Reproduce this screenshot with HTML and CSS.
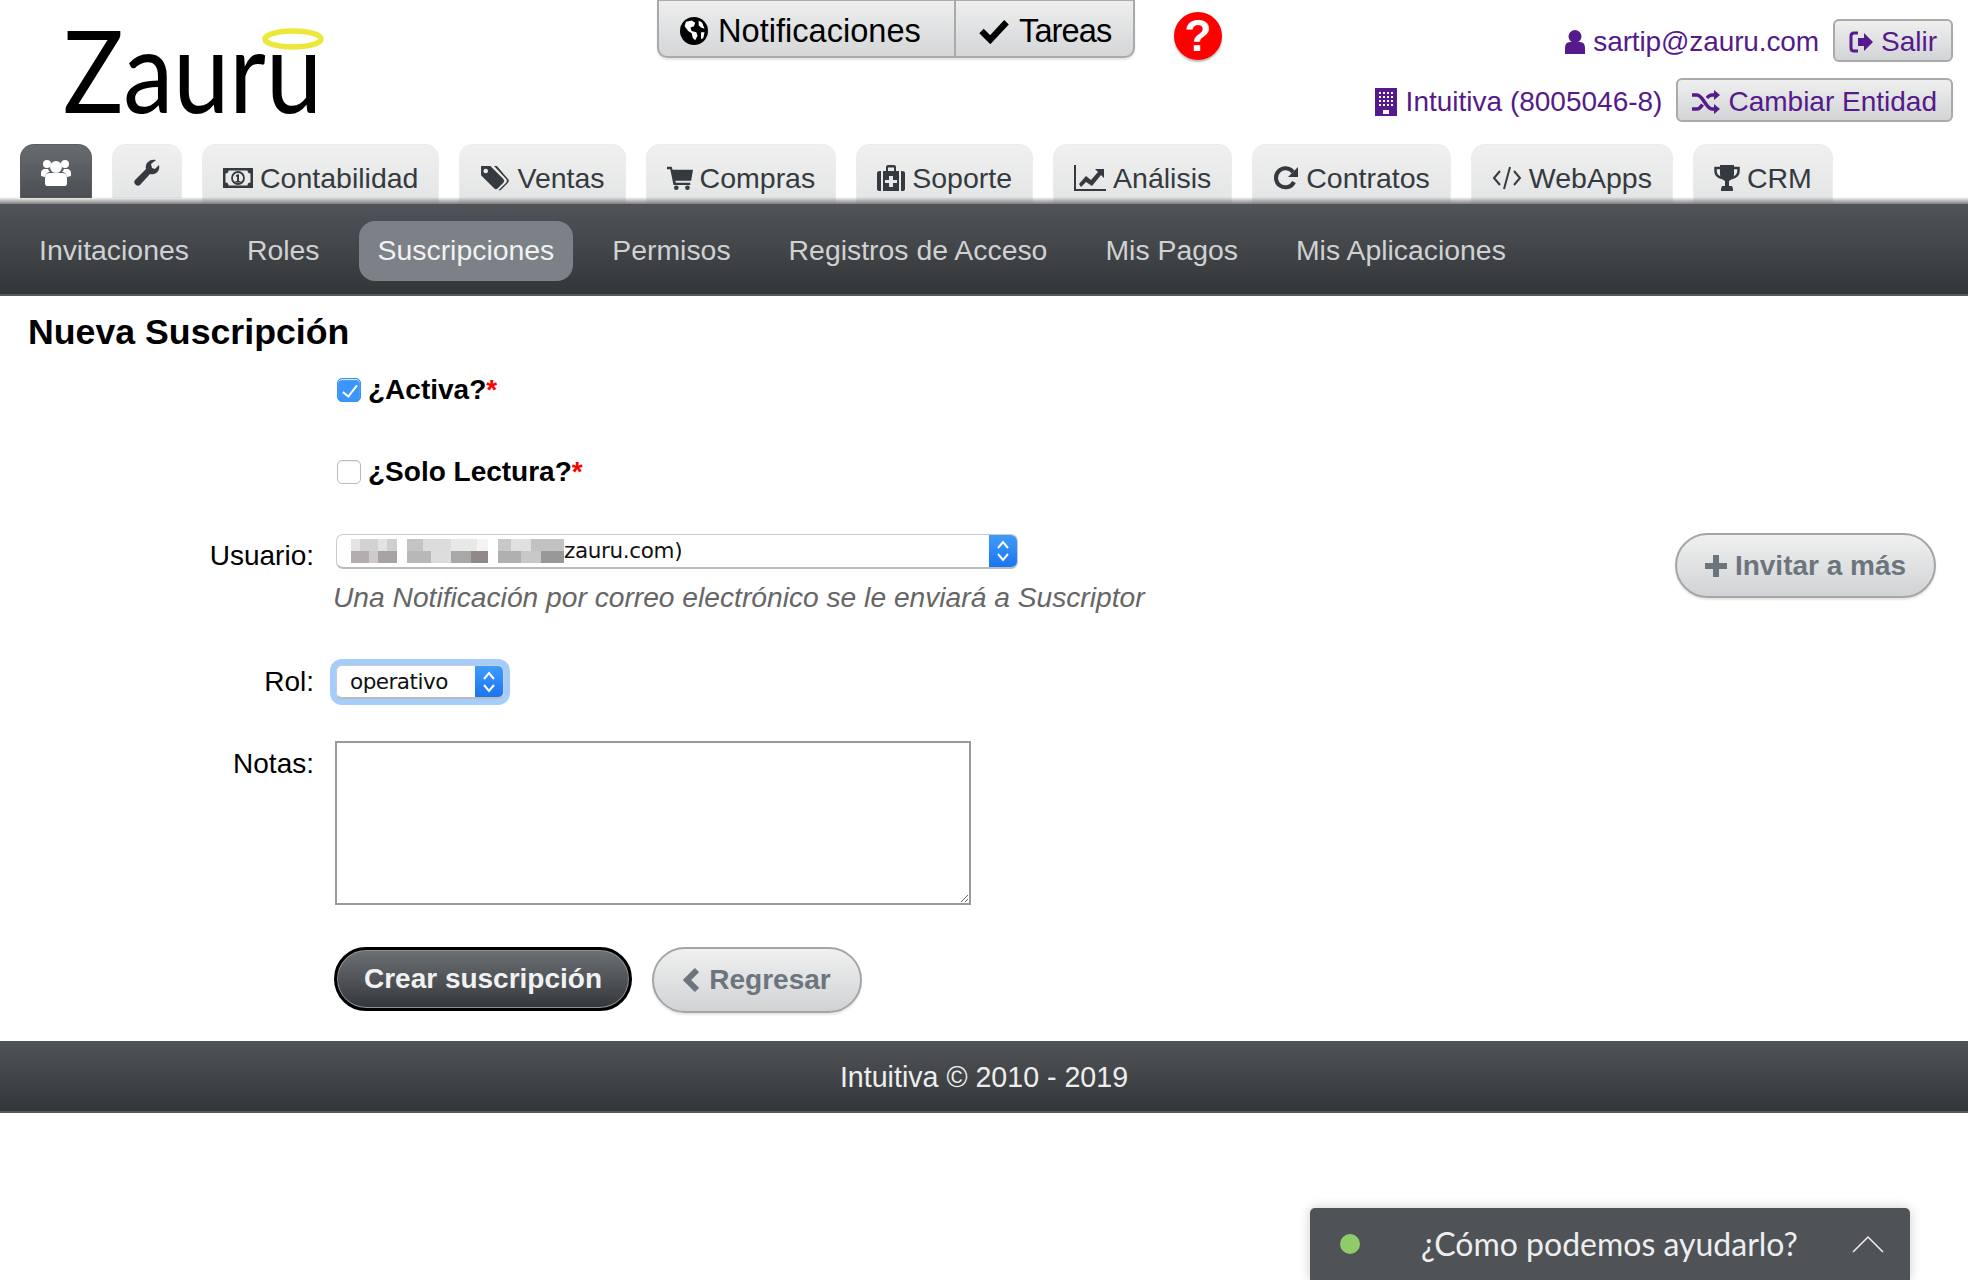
FILE: index.html
```html
<!DOCTYPE html>
<html lang="es">
<head>
<meta charset="utf-8">
<title>Nueva Suscripción - Zauru</title>
<link rel="stylesheet" href="styles.css">
</head>
<body>
<header class="top">
  <a class="logo">
    <svg class="logo-mark" viewBox="0 0 360 144"><text class="logo-text" x="0" y="113" textLength="259" lengthAdjust="spacingAndGlyphs">Zauru</text></svg>
    <svg class="halo" viewBox="0 0 62 24"><ellipse cx="31" cy="12" rx="28" ry="8" fill="none" stroke="#ebe83a" stroke-width="5.500"/></svg>
  </a>
  <div class="alerts">
    <a class="alert-btn alert-notif">
      <svg class="ico ico-lg" viewBox="0 0 24 24"><circle cx="12" cy="12" r="12" fill="#000"/><path fill="#fff" d="M5 4l5-1 3 2-1 3-3 1 1 3 4 1 1 3-2 4-2-2-1-4-3-2-3-4zM16 3l3 2 2 5-3-1-2-2zM18 13l3 0-1 5-2 1z"/></svg>
      Notificaciones</a>
    <a class="alert-btn alert-task">
      <svg class="ico ico-check" viewBox="0 0 24 20"><path fill="none" stroke="#000" stroke-width="5" d="M2 10l7 7L22 3"/></svg>
      Tareas</a>
  </div>
  <a class="help">?</a>
  <div class="account">
    <div class="account-row account-row-1">
      <a class="link">
        <svg class="ico" viewBox="0 0 20 24"><circle cx="10" cy="6.500" r="6.500"/><path d="M0 24v-6q0-6 5-6h10q5 0 5 6v6z"/></svg>
        sartip@zauru.com</a>
      <a class="small-btn btn-salir">
        <svg class="ico" viewBox="0 0 24 24"><path fill="none" stroke="currentColor" stroke-width="3" d="M9 3H5Q2 3 2 6v12q0 3 3 3h4"/><path d="M9 8h6V3l9 9-9 9v-5H9z"/></svg>
        Salir</a>
    </div>
    <div class="account-row account-row-2">
      <a class="link">
        <svg class="ico ico-build" viewBox="0 0 22 28" fill-rule="evenodd"><path d="M0 0h22v28H0zM4 4v2h2V4zm4 0v2h2V4zm4 0v2h2V4zm4 0v2h2V4zM4 8v2h2V8zm4 0v2h2V8zm4 0v2h2V8zm4 0v2h2V8zM4 12v2h2v-2zm4 0v2h2v-2zm4 0v2h2v-2zm4 0v2h2v-2zM4 16v2h2v-2zm4 0v2h2v-2zm4 0v2h2v-2zm4 0v2h2v-2zM8 22v4h6v-4z"/></svg>
        Intuitiva (8005046-8)</a>
      <a class="small-btn btn-cambiar">
        <svg class="ico ico-shuffle" viewBox="0 0 28 24"><path fill="none" stroke="currentColor" stroke-width="3.500" d="M0 5h5c6 0 9 14 15 14h3M0 19h5c2.500 0 4-2 5.500-4.500M15 8c1.500-1.800 3-3 5-3h3"/><path d="M22 0l6 5-6 5zM22 14l6 5-6 5z"/></svg>
        Cambiar Entidad</a>
    </div>
  </div>
</header>

<nav class="tabs">
  <a class="tab tab-icon tab-dark"><svg class="ico ico-users" viewBox="0 0 30 28"><circle cx="15" cy="9" r="6"/><circle cx="6" cy="6" r="4"/><circle cx="24" cy="6" r="4"/><path d="M6 28q-2 0-2-3v-5q0-5 5-5h12q5 0 5 5v5q0 3-2 3z"/><path d="M0 18v-3q0-3 3-4h4q1 2 2 3-4 0-5 5zM30 18v-3q0-3-3-4h-4q-1 2-2 3 4 0 5 5z"/></svg></a>
  <a class="tab tab-icon tab-wrench"><svg class="ico" viewBox="0 0 26 28"><path d="M25 7c1 4-1 8-5 9-2 .5-3 .3-4 0L6 27c-1 1-3 1-4 0l-1-1c-1-1-1-3 0-4L12 11c-.500-2-.300-4 1-6 2-3 6-4 9-3l-5 4 1 4 3 1z"/></svg></a>
  <a class="tab"><svg class="ico ico-money" viewBox="0 0 30 24" fill-rule="evenodd"><path d="M0 2h30v20H0zM5.500 4.500q0 3-3 3v9q3 0 3 3h19q0-3 3-3v-9q-3 0-3-3z"/><circle cx="15" cy="12" r="6" fill="none" stroke="currentColor" stroke-width="1.800"/><path d="M13 9l3-1v7h1.500v1.500h-5V15H14v-4.500l-1 .4z"/></svg>Contabilidad</a>
  <a class="tab"><svg class="ico ico-tags" viewBox="0 0 32 28" fill-rule="evenodd"><path d="M1 1h10l14 14q2 2 0 4l-6 6q-2 2-4 0L1 11zM6 4a2.500 2.500 0 1 0 .1 0z"/><path d="M15 1h3l12 14q2 2 0 4l-7 7q-2 2-3 1l8-8q2-2 0-4z"/></svg>Ventas</a>
  <a class="tab"><svg class="ico ico-cart" viewBox="0 0 28 26"><path d="M0 1h5l1 3h22l-2 12H9l.500 2H25v2.500H7L3.500 3.500H0z"/><circle cx="10" cy="23.500" r="2.500"/><circle cx="22" cy="23.500" r="2.500"/></svg>Compras</a>
  <a class="tab"><svg class="ico ico-med" viewBox="0 0 28 26" fill-rule="evenodd"><path d="M0 8q0-2 3-2h1v20H3q-3 0-3-2zM28 8q0-2-3-2h-1v20h1q3 0 3-2zM6 6h3V2q0-2 2-2h6q2 0 2 2v4h3v20H6zM11 2.500V6h6V2.500zM12 11v4H8v3h4v4h4v-4h4v-3h-4v-4z"/></svg>Soporte</a>
  <a class="tab"><svg class="ico ico-chart" viewBox="0 0 32 26"><path d="M0 0h2v24h30v2H0z"/><path d="M5 19l7-8 5 4 7-8-3-3h9v9l-3-3-9 11-6-4-5 5z"/></svg>Análisis</a>
  <a class="tab"><svg class="ico ico-refresh" viewBox="0 0 26 26"><path fill="none" stroke="currentColor" stroke-width="4" d="M21 17a9.500 9.500 0 1 1-1-10"/><path d="M25 2v10H15z"/></svg>Contratos</a>
  <a class="tab"><svg class="ico ico-code" viewBox="0 0 30 26"><path fill="none" stroke="currentColor" stroke-width="2" d="M8 6l-6 7 6 7M22 6l6 7-6 7M18 2l-6 22"/></svg>WebApps</a>
  <a class="tab"><svg class="ico ico-trophy" viewBox="0 0 26 26"><path d="M6 0h14v9c0 4-3 6-5 7v5h3l1 3v2H7v-2l1-3h3v-5c-2-1-5-3-5-7z"/><path fill="none" stroke="currentColor" stroke-width="2.500" d="M6 3H1.500v3C1.500 10 4 12 8 13M20 3h4.500v3c0 4-2.500 6-6.500 7"/></svg>CRM</a>
</nav>

<nav class="subnav">
  <a class="pill">Invitaciones</a>
  <a class="pill">Roles</a>
  <a class="pill pill-active">Suscripciones</a>
  <a class="pill">Permisos</a>
  <a class="pill">Registros de Acceso</a>
  <a class="pill">Mis Pagos</a>
  <a class="pill">Mis Aplicaciones</a>
</nav>

<main class="main">
  <h1 class="title">Nueva Suscripción</h1>
  <form class="form">
    <label class="check-row"><input class="check" type="checkbox" checked> ¿Activa?<span class="req">*</span></label>
    <label class="check-row check-row-2"><input class="check" type="checkbox"> ¿Solo Lectura?<span class="req">*</span></label>

    <div class="field field-user">
      <span class="label">Usuario:</span>
      <div class="user-col">
        <div class="select select-user">
          <span class="select-value">
            <span class="mosaic"><span class="mosaic-top"></span><span class="mosaic-bottom"></span></span>zauru.com)
          </span>
          <span class="select-arrow"><svg viewBox="0 0 16 26"><path fill="none" stroke="#fff" stroke-width="2" d="M3 10l5-6 5 6M3 16l5 6 5-6"/></svg></span>
        </div>
        <p class="hint">Una Notificación por correo electrónico se le enviará a Suscriptor</p>
      </div>
      <a class="pill-btn btn-invite"><svg class="ico ico-plus" viewBox="0 0 22 22"><path d="M8 0h6v8h8v6h-8v8H8v-8H0V8h8z"/></svg>Invitar a más</a>
    </div>

    <div class="field field-rol">
      <span class="label">Rol:</span>
      <div class="select select-rol">
        <span class="select-value">operativo</span>
        <span class="select-arrow"><svg viewBox="0 0 16 26"><path fill="none" stroke="#fff" stroke-width="2" d="M3 10l5-6 5 6M3 16l5 6 5-6"/></svg></span>
      </div>
    </div>

    <div class="field field-notes">
      <span class="label">Notas:</span>
      <textarea class="notes"></textarea>
    </div>

    <div class="actions">
      <button class="pill-btn btn-create" type="button">Crear suscripción</button>
      <a class="pill-btn btn-back"><svg class="ico ico-back" viewBox="0 0 16 26"><path fill="none" stroke="currentColor" stroke-width="6" d="M14 3L4 13l10 10"/></svg>Regresar</a>
    </div>
  </form>
</main>

<footer class="footer">Intuitiva © 2010 - 2019</footer>

<aside class="chat">
  <span class="chat-dot"></span>
  <span class="chat-text">¿Cómo podemos ayudarlo?</span>
  <svg class="chat-chev" viewBox="0 0 32 18"><path fill="none" stroke="#eee" stroke-width="1.500" d="M1 17L16 2l15 15"/></svg>
</aside>
</body>
</html>
```

FILE: styles.css
```css
* { box-sizing: border-box; }
html, body { margin: 0; height: 100%; }
body {
  position: relative;
  min-height: 1280px;
  overflow: hidden;
  background: #fff;
  color: #212529;
  font: 28px/1.2 "Liberation Sans", Arial, sans-serif;
}
a { color: inherit; text-decoration: none; }
.ico { width: 1em; height: 1em; fill: currentColor; flex: none; }

/* header */
.top { display: flex; align-items: flex-start; height: 144px; }
.logo { position: relative; display: block; width: 657px; height: 144px; flex: none; }
.logo-mark { position: absolute; left: 63px; top: 0; width: 360px; height: 144px; }
.logo-text { font: 400 114px Lato, sans-serif; fill: #000; }
.halo { position: absolute; left: 262px; top: 27px; width: 62px; height: 24px; }
.alerts {
  display: flex; height: 59px; width: 478px; flex: none;
  border: 2px solid #aaa; border-radius: 0 0 10px 10px;
  background: linear-gradient(#eeeeee, #d4d6d8);
  box-shadow: 0 2px 2px #e4e4e4;
  font-size: 32.600px; color: #000;
  margin-top: -1px;
}
.alert-btn { display: flex; align-items: center; gap: 10px; padding: 5px 0 0 21px; }
.alert-notif { width: 295px; flex: none; }
.alert-task { flex: 1; border-left: 2px solid #aaa; padding-left: 23px; letter-spacing: -.9px; }
.ico-lg { width: 28px; height: 28px; }
.ico-check { width: 30px; height: 26px; }
.help {
  display: flex; align-items: center; justify-content: center;
  width: 48px; height: 48px; margin: 12px 0 0 39px; flex: none;
  border-radius: 50%; background: #f00; color: #fff;
  box-shadow: 0 2px 2px #bbb;
  font-size: 44px; font-weight: 700; line-height: 1;
}
.account { margin-left: auto; padding: 19px 15px 0 0; display: flex; flex-direction: column; align-items: flex-end; }
.account-row { display: flex; align-items: center; gap: 14px; color: #551a8b; height: 43px; }
.account-row-1 .link { letter-spacing: -.12px; }
.account-row-2 { margin-top: 16px; height: 44px; }
.account-row-2 .link { padding-top: 4px; }
.account-row-2 .small-btn { padding-top: 3px; }
.link { display: flex; align-items: center; gap: 8px; padding-top: 2px; }
.link .ico { width: 20px; height: 24px; }
.link .ico-build { width: 22px; height: 28px; margin-right: 1px; }
.small-btn {
  display: flex; align-items: center; gap: 8px; height: 100%;
  padding: 2px 14px 0;
  border: 2px solid #aaa; border-radius: 6px;
  background: linear-gradient(#efefef, #d2d4d6);
}
.small-btn .ico { width: 24px; height: 24px; }
.btn-salir { width: 120px; justify-content: center; padding: 2px 0 0; }
.small-btn .ico-shuffle { width: 28px; }

/* tabs */
.tabs { display: flex; gap: 20px; height: 60px; padding-left: 20px; color: #343a40; font-size: 28.500px; }
.tab {
  display: flex; align-items: center; gap: 7px;
  height: 60px; padding: 7px 20px 0;
  border: 1px solid #ececec; border-bottom: 0;
  border-radius: 14px 14px 0 0;
  background: linear-gradient(#f0f0f0, #e3e4e5);
}
.tab .ico { width: 30px; height: 26px; }
.tab .ico-cart, .tab .ico-refresh, .tab .ico-trophy { width: 26px; }
.tab .ico-med { width: 28px; }
.tab .ico-chart { width: 32px; }
.tab-icon { justify-content: center; padding: 0; height: 54px; }
.tab-dark { width: 72px; background: linear-gradient(#676c71, #4a4e52); border-color: #5a5e63; color: #fff; }
.tab-wrench { width: 70px; }
.tab .ico-users { height: 28px; }
.tab-wrench .ico { width: 26px; height: 28px; }

/* sub navigation */
.subnav {
  position: relative;
  display: flex; align-items: center; gap: 20px;
  height: 92px; padding: 3px 20px 0;
  background: linear-gradient(#505458, #333639);
  border-bottom: 2px solid #555a5e;
  color: #cfd1d2;
  font-size: 28.400px;
}
.subnav::before {
  content: ""; position: absolute; left: 0; right: 0; top: -7px; height: 7px;
  background: linear-gradient(rgba(120,120,120,0), rgba(120,120,120,.95));
}
.pill { display: flex; align-items: center; height: 60px; padding: 0 19px; border-radius: 16px; }
.pill-active { background: #7b8186; color: #f2f2f2; }

/* main */
.main { height: 745px; padding: 16px 28px 0; }
.title { margin: 0; font-size: 35.700px; line-height: 40px; font-weight: 700; color: #000; }
.form { display: flex; flex-direction: column; color: #000; }
.check-row { display: flex; align-items: center; height: 24px; margin: 26px 0 0 309px; font-weight: 700; line-height: 24px; gap: 7px; }
.check-row-2 { margin-top: 58px; }
.req { color: #f00; margin-left: -7px; }
.check {
  appearance: none; width: 24px; height: 24px; margin: 0; flex: none;
  border: 1px solid #bbb; border-radius: 5px; background: #fff; box-shadow: inset 0 1px 1px #eee;
}
.check:checked {
  border-color: #3b8ff5;
  background: #3b95fb;
  position: relative;
}
.check:checked::after {
  content: ""; position: absolute; left: 8px; top: 3px; width: 6px; height: 13px;
  border: solid #fff; border-width: 0 2px 2px 0; transform: rotate(38deg);
}
.field { display: grid; grid-template-columns: 286px auto; column-gap: 22px; align-items: start; }
.label { text-align: right; line-height: 34px; }
.field-user { grid-template-columns: 286px 1fr auto; margin-top: 50px; }
.field-user .label { padding-top: 5px; }
.field-rol { margin-top: 51px; }
.field-notes { margin-top: 42px; }
.user-col { min-width: 0; }
.select {
  display: flex; align-items: center; justify-content: space-between;
  height: 34px; overflow: hidden;
  border: 1px solid #ccc; border-bottom: 2px solid #bbb; border-radius: 7px;
  background: #fff;
  font: 21.500px/1 "DejaVu Sans", sans-serif; color: #111;
}
.select-user { width: 682px; height: 35px; }
.select-value { display: flex; align-items: center; padding-left: 14px; letter-spacing: -.35px; }
.mosaic { display: flex; flex-direction: column; width: 213px; height: 24px; filter: blur(.7px); }
.mosaic-top, .mosaic-bottom { flex: 1; }
.mosaic-top {
  background: linear-gradient(90deg,
    #e4e4e4 0 9px, #d2d2d2 9px 27px, #e2e2e2 27px 36px, #cfcfcf 36px 46px, #fff 46px 56px,
    #c4c4c4 56px 72px, #dcdcdc 72px 100px, #e8e8e8 100px 126px, #f4f4f4 126px 137px, #fff 137px 147px,
    #c8c8c8 147px 160px, #e0e0e0 160px 180px, #c2c2c2 180px 213px);
}
.mosaic-bottom {
  background: linear-gradient(90deg,
    #b4acaf 0 18px, #cfc9cb 18px 27px, #a8a2a4 27px 46px, #fff 46px 56px,
    #b8b8b8 56px 80px, #ddd 80px 100px, #a8a8a8 100px 120px, #8f8a88 120px 137px, #fff 137px 147px,
    #b0b0b0 147px 170px, #c8c8c8 170px 190px, #989898 190px 213px);
}
.select-arrow {
  display: flex; align-items: center; justify-content: center;
  width: 28px; height: 100%; flex: none;
  background: linear-gradient(#3f9cfb, #1b74ef);
}
.select-arrow svg { width: 16px; height: 26px; }
.hint { margin: 11px 0 0 -3px; font-style: italic; font-size: 28.200px; color: #666; line-height: 34px; }
.select-rol {
  width: 168px;
  box-shadow: 0 0 0 6px #a5cdf9;
  border-radius: 6px;
}
.select-rol .select-value { padding-left: 13px; letter-spacing: -.5px; }
.notes {
  display: block; width: 636px; height: 164px; margin: 0 0 0 -1px;
  border: 2px solid #999; border-radius: 0; background: #fff;
  font: inherit; outline: 0;
}
.field-notes .label { line-height: 46px; }
.pill-btn {
  display: inline-flex; align-items: center; justify-content: center; gap: 8px;
  border-radius: 34px; font: 700 28px/1 "Liberation Sans", Arial, sans-serif;
}
.btn-invite, .btn-back {
  color: #6c757d;
  border: 2px solid #a5a5a5;
  background: linear-gradient(#f0f0f0, #d0d3d5);
  box-shadow: 0 2px 2px #e6e6e6;
}
.btn-invite { width: 261px; height: 65px; margin: -1px 4px 0 0; }
.ico-plus { width: 22px; height: 22px; }
.actions { display: flex; gap: 20px; margin: 42px 0 0 306px; }
.btn-create {
  width: 298px; height: 64px;
  color: #f1f1f1;
  border: 3px solid #000;
  background: linear-gradient(#6c7176, #34373a);
  box-shadow: inset 0 0 0 1px #8d9194;
}
.btn-back { width: 210px; height: 66px; gap: 10px; }
.ico-back { width: 16px; height: 26px; }

/* footer */
.footer {
  display: flex; align-items: center; justify-content: center;
  height: 72px; padding-top: 2px;
  background: linear-gradient(#505458, #333639);
  border-bottom: 2px solid #555a5e;
  color: #eee;
  font-size: 28.600px;
}

/* chat widget */
.chat {
  position: absolute; left: 1310px; top: 1208px;
  display: flex; align-items: center;
  width: 600px; height: 72px; padding: 0 26px 0 30px;
  border-radius: 5px 5px 0 0;
  background: #4f5357;
  box-shadow: 0 0 12px rgba(0,0,0,.2);
  color: #eee;
  font: 32px/1 Lato, sans-serif;
}
.chat-dot { width: 20px; height: 20px; border-radius: 50%; background: #8fcb68; flex: none; }
.chat-text { margin-left: 61px; white-space: nowrap; }
.chat-chev { width: 32px; height: 18px; margin-left: auto; }
```
